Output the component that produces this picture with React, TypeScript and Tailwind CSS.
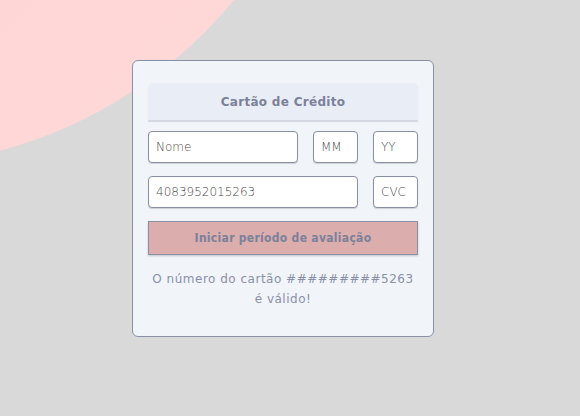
import { useState } from "react";

const font = "font-['DejaVu_Sans',sans-serif]";

export default function App() {
  const [name, setName] = useState("");
  const [month, setMonth] = useState("");
  const [year, setYear] = useState("");
  const [cardNumber, setCardNumber] = useState("4083952015263");
  const [cvc, setCvc] = useState("");

  const masked = "#".repeat(Math.max(cardNumber.length - 4, 0)) + cardNumber.slice(-4);

  const inputClass =
    "h-[32px] rounded-[4px] border border-[#8990a6] bg-white px-[7px] text-[12px] font-extralight text-[#4a4a4a] shadow-[0_1px_1px_rgba(0,0,0,0.15)] outline-none placeholder:text-[#4a4a4a]";

  return (
    <div className={`relative min-h-[416px] w-[580px] overflow-hidden bg-[#d9d9d9] ${font}`}>
      <div className="absolute left-[-571px] top-[-742px] h-[908px] w-[908px] rounded-full bg-[linear-gradient(135deg,#fdd2d2,#ffd8d8)]" />

      <div className="relative pl-[132px] pt-[60px]">
        <div className="flex h-[277px] w-[302px] flex-col rounded-[6px] border border-[#8990a6] bg-[#f1f4f9] px-[15px] pt-[22px]">
          <div className="flex h-[37px] items-center justify-center rounded-t-[5px] bg-[#e9edf5] text-[12px] font-bold tracking-[0.3px] text-[#7b8199] shadow-[0_2px_1px_rgba(120,128,150,0.25)]">
            Cartão de Crédito
          </div>

          <div className="mt-[11px] flex gap-[15px]">
            <input
              className={`${inputClass} w-[150px]`}
              placeholder="Nome"
              value={name}
              onChange={(e) => setName(e.target.value)}
            />
            <input
              className={`${inputClass} w-[45px]`}
              placeholder="MM"
              value={month}
              onChange={(e) => setMonth(e.target.value)}
            />
            <input
              className={`${inputClass} w-[45px]`}
              placeholder="YY"
              value={year}
              onChange={(e) => setYear(e.target.value)}
            />
          </div>

          <div className="mt-[13px] flex gap-[15px]">
            <input
              className={`${inputClass} w-[210px]`}
              value={cardNumber}
              onChange={(e) => setCardNumber(e.target.value)}
            />
            <input
              className={`${inputClass} w-[45px]`}
              placeholder="CVC"
              value={cvc}
              onChange={(e) => setCvc(e.target.value)}
            />
          </div>

          <button
            type="button"
            className="mt-[13px] h-[34px] w-[270px] border border-[#8990a6] bg-[#dcadad] font-['DejaVu_Sans_Condensed','DejaVu_Sans',sans-serif] text-[12px] font-bold tracking-[0.3px] text-[#7b8199] shadow-[0_1px_2px_rgba(0,0,0,0.2)]"
          >
            Iniciar período de avaliação
          </button>

          <p className="mt-[14px] whitespace-nowrap text-center text-[12px] leading-[20px] tracking-[0.5px] text-[#8a90a6]">
            O número do cartão {masked}
            <br />é válido!
          </p>
        </div>
      </div>
    </div>
  );
}
